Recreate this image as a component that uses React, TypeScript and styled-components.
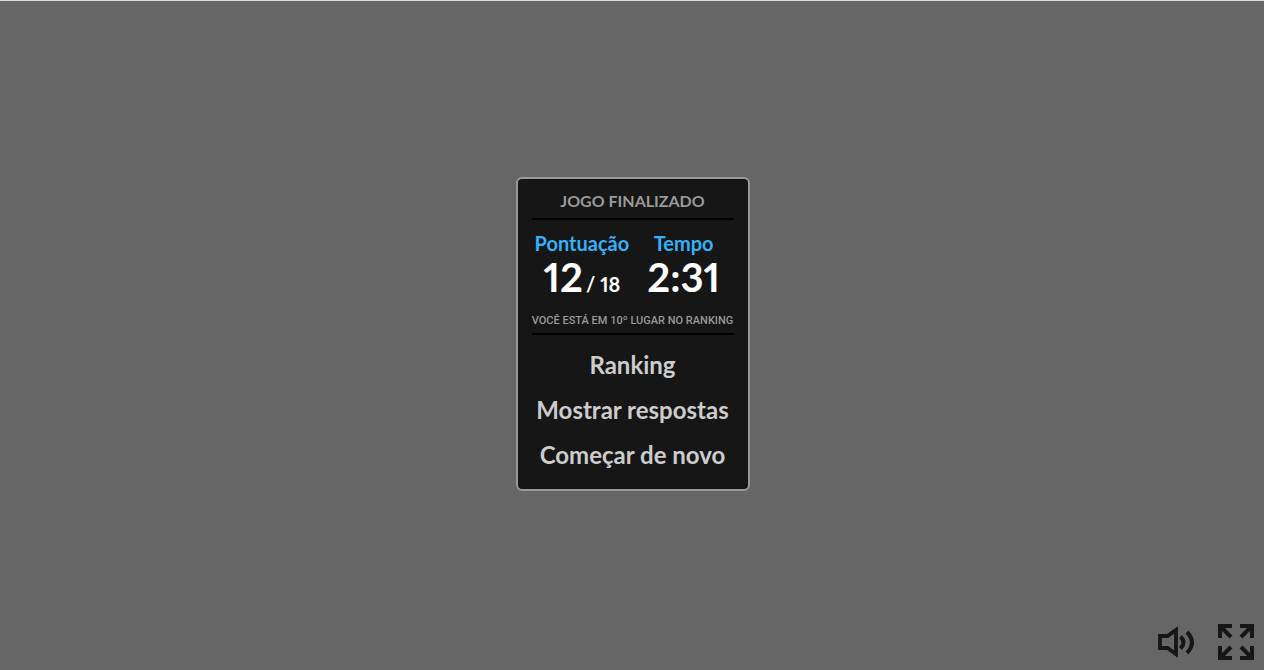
import React from "react";
import styled, { createGlobalStyle } from "styled-components";

const GlobalStyle = createGlobalStyle`
  * { box-sizing: border-box; }
  body { margin: 0; background: #666; font-family: Lato, "Open Sans", sans-serif; }
`;

const Page = styled.main`
  position: relative;
  min-height: 100vh;
  display: flex;
  align-items: center;
  justify-content: center;
  padding: 0 0 4px 1px;
  border-top: 1px solid #d8dbda;
  background: #666;
`;

const Panel = styled.section`
  width: 234px;
  padding: 8px 14px 12px;
  display: flex;
  flex-direction: column;
  background: #161616;
  border: 2px solid #999;
  border-radius: 6px;
`;

const Title = styled.h1`
  margin: 0;
  padding-bottom: 3px;
  border-bottom: 2px solid #000;
  color: #999;
  font-size: 16px;
  font-weight: 700;
  line-height: 28px;
  text-align: center;
  text-transform: uppercase;
`;

const Scores = styled.dl`
  display: flex;
  gap: 18px;
  margin: 0;
  padding: 10px 0 0 3px;
`;

const Score = styled.div`
  display: flex;
  flex-direction: column;
  align-items: center;
`;

const Label = styled.dt`
  color: #35b0fb;
  font-size: 20px;
  font-weight: 700;
  line-height: 26px;
`;

const Value = styled.dd`
  margin: 0;
  color: #fff;
  font-size: 40px;
  font-weight: 700;
  font-variant-numeric: proportional-nums;
  line-height: 42px;
  white-space: nowrap;
`;

const Total = styled.span`
  padding-left: 3px;
  font-size: 20px;
`;

const Placement = styled.p`
  margin: 7px 0 0;
  padding-bottom: 3px;
  border-bottom: 2px solid #000;
  color: #999;
  font-family: Roboto, sans-serif;
  font-size: 11px;
  font-weight: 500;
  line-height: 18px;
  text-align: center;
  text-transform: uppercase;
  white-space: nowrap;
`;

const Menu = styled.nav`
  display: flex;
  flex-direction: column;
  padding-top: 7px;
`;

const MenuButton = styled.button`
  padding: 0;
  border: 0;
  background: none;
  color: #ccc;
  font: 700 24px/45px Lato, "Open Sans", sans-serif;
  white-space: nowrap;
  cursor: pointer;
`;

const Controls = styled.div`
  position: absolute;
  right: 8px;
  bottom: 8px;
  display: flex;
  gap: 20px;
`;

const IconButton = styled.button`
  display: flex;
  padding: 0;
  border: 0;
  background: none;
  color: #161616;
  cursor: pointer;
`;

export default function App() {
  return (
    <>
      <GlobalStyle />
      <Page>
        <Panel>
          <Title>Jogo finalizado</Title>
          <Scores>
            <Score>
              <Label>Pontuação</Label>
              <Value>12<Total>/ 18</Total></Value>
            </Score>
            <Score>
              <Label>Tempo</Label>
              <Value>2:31</Value>
            </Score>
          </Scores>
          <Placement>Você está em 10º lugar no ranking</Placement>
          <Menu>
            <MenuButton>Ranking</MenuButton>
            <MenuButton>Mostrar respostas</MenuButton>
            <MenuButton>Começar de novo</MenuButton>
          </Menu>
        </Panel>
        <Controls>
          <IconButton aria-label="Som">
            <svg width="40" height="40" viewBox="0 0 40 40" fill="none" stroke="currentColor" strokeWidth="4">
              <path d="M4 14H11.500L20 8V32L11.500 26H4Z" strokeWidth="3.800" />
              <path d="M24.500 14.500Q30.500 20.500 24.500 26.500" />
              <path d="M31 10Q41 20.500 31 31" />
            </svg>
          </IconButton>
          <IconButton aria-label="Tela cheia">
            <svg width="40" height="40" viewBox="0 0 40 40" fill="none" stroke="currentColor" strokeWidth="4">
              <path d="M16 4H4V16M4 4L15 15" />
              <path d="M24 4H36V16M36 4L25 15" />
              <path d="M16 36H4V24M4 36L15 25" />
              <path d="M24 36H36V24M36 36L25 25" />
            </svg>
          </IconButton>
        </Controls>
      </Page>
    </>
  );
}
